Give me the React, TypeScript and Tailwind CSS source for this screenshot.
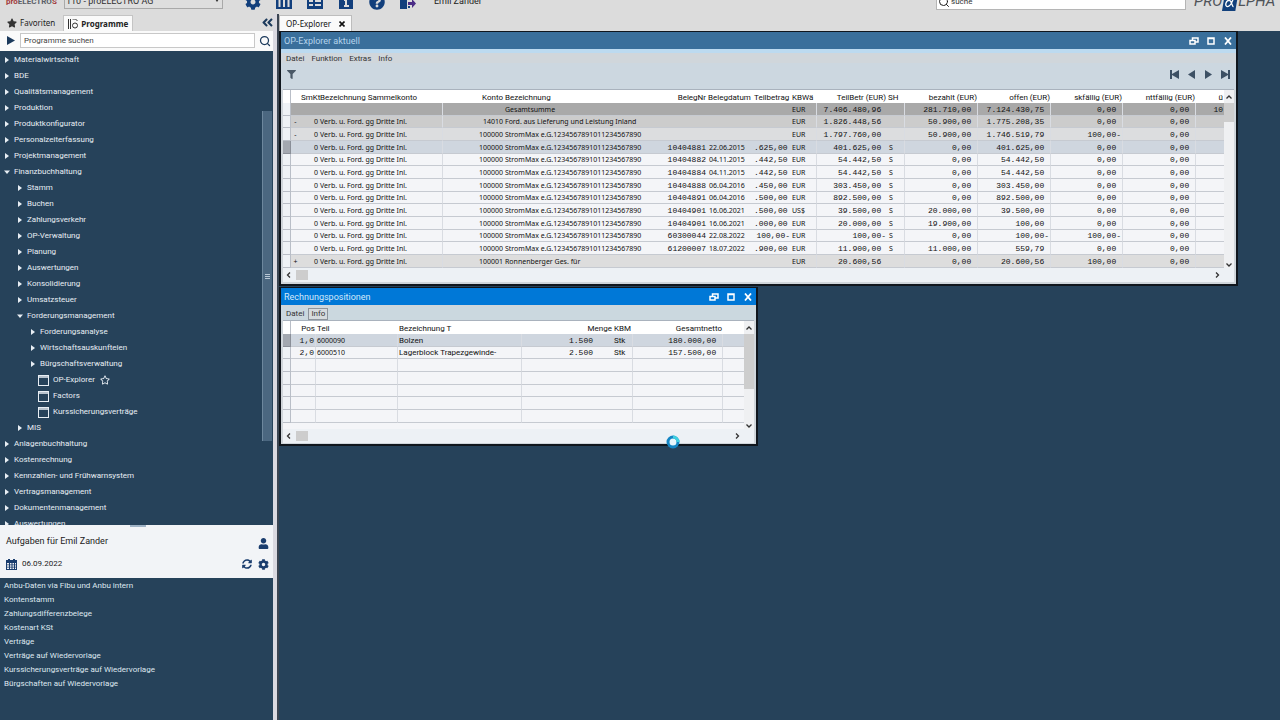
import React from "react";
import { FaAngleDoubleLeft, FaCog, FaFilter, FaQuestionCircle, FaRegStar, FaStar, FaSyncAlt, FaUser } from "react-icons/fa";
import { FiSearch } from "react-icons/fi";

type Kind = "closed" | "open" | "leaf";
type TreeRow = { level: number; label: string; kind: Kind; star?: boolean };

const tree: TreeRow[] = [
  { level: 0, label: "Materialwirtschaft", kind: "closed" },
  { level: 0, label: "BDE", kind: "closed" },
  { level: 0, label: "Qualitätsmanagement", kind: "closed" },
  { level: 0, label: "Produktion", kind: "closed" },
  { level: 0, label: "Produktkonfigurator", kind: "closed" },
  { level: 0, label: "Personalzeiterfassung", kind: "closed" },
  { level: 0, label: "Projektmanagement", kind: "closed" },
  { level: 0, label: "Finanzbuchhaltung", kind: "open" },
  { level: 1, label: "Stamm", kind: "closed" },
  { level: 1, label: "Buchen", kind: "closed" },
  { level: 1, label: "Zahlungsverkehr", kind: "closed" },
  { level: 1, label: "OP-Verwaltung", kind: "closed" },
  { level: 1, label: "Planung", kind: "closed" },
  { level: 1, label: "Auswertungen", kind: "closed" },
  { level: 1, label: "Konsolidierung", kind: "closed" },
  { level: 1, label: "Umsatzsteuer", kind: "closed" },
  { level: 1, label: "Forderungsmanagement", kind: "open" },
  { level: 2, label: "Forderungsanalyse", kind: "closed" },
  { level: 2, label: "Wirtschaftsauskunfteien", kind: "closed" },
  { level: 2, label: "Bürgschaftsverwaltung", kind: "closed" },
  { level: 3, label: "OP-Explorer", kind: "leaf", star: true },
  { level: 3, label: "Factors", kind: "leaf" },
  { level: 3, label: "Kurssicherungsverträge", kind: "leaf" },
  { level: 1, label: "MIS", kind: "closed" },
  { level: 0, label: "Anlagenbuchhaltung", kind: "closed" },
  { level: 0, label: "Kostenrechnung", kind: "closed" },
  { level: 0, label: "Kennzahlen- und Frühwarnsystem", kind: "closed" },
  { level: 0, label: "Vertragsmanagement", kind: "closed" },
  { level: 0, label: "Dokumentenmanagement", kind: "closed" },
  { level: 0, label: "Auswertungen", kind: "closed" },
];

const indent = ["pl-1", "pl-[17px]", "pl-[30px]", "pl-[38px]"];

const tasks = [
  "Anbu-Daten via Fibu und Anbu intern",
  "Kontenstamm",
  "Zahlungsdifferenzbelege",
  "Kostenart KSt",
  "Verträge",
  "Verträge auf Wiedervorlage",
  "Kurssicherungsverträge auf Wiedervorlage",
  "Bürgschaften auf Wiedervorlage",
];

function Arrow({ open }: { open?: boolean }) {
  return (
    <svg viewBox="0 0 6 6" className="size-[6px] shrink-0 fill-current">
      {open ? <path d="M0 1.5h6L3 5z" /> : <path d="M1 0v6l4-3z" />}
    </svg>
  );
}

function WindowIcon() {
  return (
    <svg viewBox="0 0 11 11" className="size-[11px] shrink-0" fill="none" stroke="currentColor">
      <rect x="0.5" y="0.5" width="10" height="10" />
      <path d="M0 2h11" strokeWidth="1.5" />
    </svg>
  );
}

function CalendarIcon() {
  return (
    <svg viewBox="0 0 11 11" className="size-[11px] shrink-0" fill="currentColor">
      <path
        fillRule="evenodd"
        d="M2 0h2v1h3V0h2v1h2v10H0V1h2zM1 4v1.500h2V4zM4 4v1.500h1.500V4zM6.500 4v1.500H8V4zM9 4v1.500h1V4zM1 6.200v1.500h2V6.200zM4 6.200v1.500h1.500V6.200zM6.500 6.200v1.500H8V6.200zM9 6.200v1.500h1V6.200zM1 8.500V10h2V8.500zM4 8.500V10h1.500V8.500zM6.500 8.500V10H8V8.500zM9 8.500V10h1V8.500z"
      />
    </svg>
  );
}

function TreeItem({ row }: { row: TreeRow }) {
  return (
    <li>
      <button type="button" className={`flex h-4 w-full items-center gap-1 whitespace-nowrap text-left ${indent[row.level]}`}>
        {row.kind === "leaf" ? <WindowIcon /> : <Arrow open={row.kind === "open"} />}
        <span>{row.label}</span>
        {row.star && <FaRegStar className="ml-px size-[10px]" />}
      </button>
    </li>
  );
}

function Header() {
  const icon = "size-4 text-[#123f7c]";
  return (
    <header className="h-[14px] shrink-0 overflow-hidden bg-[#dcdcdc]">
      <div className="-mt-[10px] flex h-6 items-center">
        <div className="w-16 shrink-0 pl-[6px] text-[8px] leading-3 font-bold text-[#5b5f68]">
          <span className="text-[#a33a3a]">pro</span>ELECTRO<span className="text-[#a33a3a]">S</span>
        </div>
        <div className="flex h-4 w-[159px] shrink-0 -translate-y-px items-center border border-[#a9a9a9] bg-[#dedede] pr-[2px] text-[#333]">
          <select aria-label="Firma" className="h-3 flex-1 appearance-none bg-transparent pl-px text-[9px] leading-3">
            <option>110 - proELECTRO AG</option>
          </select>
          <svg viewBox="0 0 6 4" className="h-1 w-[6px] fill-current"><path d="M1 0h4L3 3z" /></svg>
        </div>
        <div className="flex shrink-0 items-center gap-[15px] pl-[22px]">
          <button type="button" aria-label="Einstellungen"><FaCog className={icon} /></button>
          <button type="button" aria-label="Module">
            <svg viewBox="0 0 16 16" className={icon} fill="currentColor">
              <path d="M0 0h16v15H0zM2.500 5v8h2V5zM7 5v8h2V5zM11.500 5v8h2V5z" fillRule="evenodd" />
            </svg>
          </button>
          <button type="button" aria-label="Liste">
            <svg viewBox="0 0 16 16" className={icon} fill="currentColor">
              <path d="M0 0h16v15H0zM2 6v2h4V6zM8 6v2h6V6zM2 10v2h4v-2zM8 10v2h6v-2z" fillRule="evenodd" />
            </svg>
          </button>
          <button type="button" aria-label="Info">
            <svg viewBox="0 0 16 16" className={icon} fill="currentColor">
              <path d="M1 0h14v15H1zM6 5v2h1v4H6v2h5v-2H9V5z" fillRule="evenodd" />
            </svg>
          </button>
          <button type="button" aria-label="Hilfe"><FaQuestionCircle className={icon} /></button>
          <button type="button" aria-label="Abmelden">
            <svg viewBox="0 0 16 16" className={icon} fill="currentColor">
              <path d="M0 0h7v15H0zM8 12h2v2H8z" />
              <path d="M8 8h4V5l4 4.500-4 4.500v-3H8z" fill="#4b2c86" />
            </svg>
          </button>
        </div>
        <span className="pl-[18px] text-[9px] text-[#222]">Emil Zander</span>
        <label className="ml-auto flex h-4 w-[250px] items-center gap-px border border-[#b5b5b5] bg-white pl-px">
          <FiSearch className="size-3 shrink-0 text-[#222]" />
          <input aria-label="Suche" placeholder="suche" className="w-full bg-transparent pb-px text-[8px] outline-none placeholder:text-[#333]" />
        </label>
        <div className="flex w-[94px] shrink-0 items-center pb-[2px] pl-2 text-[15px] leading-4 text-[#4f5358] italic">
          PRO
          <svg viewBox="0 0 18 18" className="mt-1 h-[18px] w-4 shrink-0">
            <path d="M3 0h15l-3 18H0z" fill="#12407c" />
            <path d="M13 3c-2 7-4 10-7 10-3 0-2-7 2-7 3 0 3 7 5 7" fill="none" stroke="#fff" strokeWidth="1.500" />
          </svg>
          LPHA
        </div>
      </div>
    </header>
  );
}

function Sidebar() {
  return (
    <aside className="flex w-[273px] shrink-0 flex-col bg-[#26425a] text-[8px] leading-none">
      <div className="flex h-[17px] shrink-0 items-end bg-[#dcdcdc] font-['Noto_Sans',sans-serif] text-[#222]">
        <button type="button" className="flex h-4 items-center gap-[3px] pl-[7px]">
          <FaStar className="size-[10px] text-[#333]" />
          Favoriten
        </button>
        <button type="button" className="ml-2 flex h-4 items-center gap-[3px] border border-b-0 border-[#c4c4c4] bg-[#fafafa] px-1 font-bold">
          <svg viewBox="0 0 10 10" className="size-[10px]" fill="none" stroke="#333">
            <path d="M.5 0v10M2.500 0v10" />
            <path d="M4.500 0h3l2 2" />
            <circle cx="7" cy="6.500" r="2.500" />
          </svg>
          Programme
        </button>
        <button type="button" aria-label="Einklappen" className="-mr-px mb-[2px] ml-auto"><FaAngleDoubleLeft className="size-[13px] text-[#1c3a5c]" /></button>
      </div>
      <div className="flex h-5 shrink-0 items-center bg-[#fafafa] pb-px pl-[7px] text-[#1c3a5c]">
        <svg viewBox="0 0 8 9" className="h-[9px] w-2 shrink-0 fill-current"><path d="M0 0l8 4.500L0 9z" /></svg>
        <input aria-label="Programme suchen" placeholder="Programme suchen" className="mr-1 ml-[5px] h-[15px] w-[235px] border border-[#c8c8c8] bg-white px-[3px] outline-none placeholder:text-[#444]" />
        <FiSearch className="size-3" strokeWidth={2.500} />
      </div>
      <nav className="flex min-h-0 flex-1 overflow-hidden text-[#e8eef4]">
        <ul className="flex-1 pt-px">
          {tree.map((row, i) => <TreeItem key={i} row={row} />)}
        </ul>
        <div className="mr-px flex w-[10px] flex-col pt-[60px]">
          <div className="flex h-[330px] flex-col items-center justify-center gap-px border-l border-[#6d879d] bg-[#4b6780]">
            <i className="h-px w-[5px] bg-[#b9c8d6]" />
            <i className="h-px w-[5px] bg-[#b9c8d6]" />
            <i className="h-px w-[5px] bg-[#b9c8d6]" />
          </div>
        </div>
      </nav>
      <section className="shrink-0">
        <div className="flex h-[53px] flex-col bg-[#f2f4f7] pr-1 pl-[6px] text-[#222]">
          <div className="mx-auto h-[2px] w-4 bg-[#9fb3c6]" />
          <div className="flex h-7 items-center justify-between text-[9px]">
            <h2>Aufgaben für Emil Zander</h2>
            <FaUser className="mt-1 size-[11px] text-[#1a3d6e]" />
          </div>
          <div className="flex h-[18px] items-center text-[#1a3d6e]">
            <CalendarIcon />
            <time className="flex-1 pl-[5px] text-[#222]">06.09.2022</time>
            <FaSyncAlt className="mr-[6px] size-[10px]" />
            <FaCog className="size-[11px]" />
          </div>
        </div>
        <ul className="h-[142px] pt-px pl-1 text-[#dfe8f0]">
          {tasks.map((t) => <li key={t}><a href="#" className="flex h-[14px] items-center">{t}</a></li>)}
        </ul>
      </section>
    </aside>
  );
}

function WindowTitle({ title, active }: { title: string; active?: boolean }) {
  return (
    <div className={`flex h-[17px] shrink-0 items-center gap-2 pt-px pr-1 pl-[3px] text-white ${active ? "bg-[#0078d7]" : "bg-[#3a6f9b]"}`}>
      <h2 className={`flex-1 text-[9px] ${active ? "text-[#d4e9fb]" : "text-[#b5d4ec]"}`}>{title}</h2>
      <button type="button" aria-label="Wiederherstellen">
        <svg viewBox="0 0 10 8" className="h-2 w-[10px]" fill="none" stroke="currentColor" strokeWidth="1.500">
          <path d="M3.500 3V1H9v4H6.500M1 3.500h5v3.500H1z" />
        </svg>
      </button>
      <button type="button" aria-label="Maximieren">
        <svg viewBox="0 0 8 8" className="size-2" fill="none" stroke="currentColor" strokeWidth="1.500">
          <path d="M1 1h6v6H1zM1 1.500h6" />
        </svg>
      </button>
      <button type="button" aria-label="Schließen" className="ml-px">
        <svg viewBox="0 0 8 8" className="size-2" fill="none" stroke="currentColor" strokeWidth="1.800">
          <path d="M1 0.500l6 7M7 0.500l-6 7" />
        </svg>
      </button>
    </div>
  );
}

function Chevron({ d }: { d: string }) {
  return (
    <svg viewBox="0 0 6 6" className="size-[6px] shrink-0" fill="none" stroke="#333" strokeWidth="1.300"><path d={d} /></svg>
  );
}

function VScroll({ thumb }: { thumb: string }) {
  return (
    <div className="flex w-[10px] shrink-0 flex-col items-center bg-[#eff0f2] pt-1">
      <Chevron d="M.5 4.500L3 2l2.500 2.500" />
      <div className={`mt-[3px] w-full bg-[#cdcdcd] ${thumb}`} />
      <div className="flex-1" />
      <Chevron d="M.5 1.500L3 4l2.500-2.500" />
    </div>
  );
}

function HScroll() {
  return (
    <div className="flex h-[14px] items-center gap-1 bg-[#edf1f5] pr-[14px] pl-[3px]">
      <Chevron d="M4 .5L1.500 3 4 5.500" />
      <div className="h-[10px] w-3 bg-[#cdcdcd]" />
      <div className="flex-1" />
      <Chevron d="M2 .5L4.500 3 2 5.500" />
    </div>
  );
}

type OpRow = {
  mark?: string; smkt: string; bez: string; konto: string; name: string; beleg: string; datum: string; teil: string;
  kbw: string; betr: string; sh: string; bezahlt: string; offen: string; sk: string; nt: string; last?: string; tone: string;
};

const V = "Verb. u. Ford. gg Dritte Inl.";
const S = "StromMax e.G.1234567891011234567890";
const plain = "bg-[#f4f5f8]";
const op = (beleg: string, datum: string, teil: string, kbw: string, betr: string, bezahlt: string, offen: string, sk = "0,00", tone = plain): OpRow => ({
  smkt: "0", bez: V, konto: "100000", name: S, beleg, datum, teil, kbw, betr, sh: "S", bezahlt, offen, sk, nt: "0,00", tone,
});

const opRows: OpRow[] = [
  { smkt: "", bez: "", konto: "", name: "Gesamtsumme", beleg: "", datum: "", teil: "", kbw: "EUR", betr: "7.406.480,96", sh: "", bezahlt: "281.710,00", offen: "7.124.430,75", sk: "0,00", nt: "0,00", last: "10", tone: "bg-[#a9a9a9]" },
  { mark: "-", smkt: "0", bez: V, konto: "14010", name: "Ford. aus Lieferung und Leistung Inland", beleg: "", datum: "", teil: "", kbw: "EUR", betr: "1.826.448,56", sh: "", bezahlt: "50.900,00", offen: "1.775.208,35", sk: "0,00", nt: "0,00", tone: "bg-[#cccccc]" },
  { mark: "-", smkt: "0", bez: V, konto: "100000", name: S, beleg: "", datum: "", teil: "", kbw: "EUR", betr: "1.797.760,00", sh: "", bezahlt: "50.900,00", offen: "1.746.519,79", sk: "100,00-", nt: "0,00", tone: "bg-[#dcdddf]" },
  op("10404881", "22.06.2015", ".625,00", "EUR", "401.625,00", "0,00", "401.625,00", "0,00", "bg-[#cfd6df]"),
  op("10404882", "04.11.2015", ".442,50", "EUR", "54.442,50", "0,00", "54.442,50"),
  op("10404884", "04.11.2015", ".442,50", "EUR", "54.442,50", "0,00", "54.442,50"),
  op("10404888", "06.04.2016", ".450,00", "EUR", "303.450,00", "0,00", "303.450,00"),
  op("10404891", "06.04.2016", ".500,00", "EUR", "892.500,00", "0,00", "892.500,00"),
  op("10404901", "16.06.2021", ".500,00", "US$", "39.500,00", "20.000,00", "39.500,00"),
  op("10404901", "16.06.2021", ".000,00", "EUR", "20.000,00", "19.900,00", "100,00"),
  op("60300044", "22.08.2022", "100,00-", "EUR", "100,00-", "0,00", "100,00-", "100,00-"),
  op("61200007", "18.07.2022", ".900,00", "EUR", "11.900,00", "11.000,00", "559,79"),
  { mark: "+", smkt: "0", bez: V, konto: "100001", name: "Ronnenberger Ges. für", beleg: "", datum: "", teil: "", kbw: "EUR", betr: "20.600,56", sh: "", bezahlt: "0,00", offen: "20.600,56", sk: "100,00", nt: "0,00", tone: "bg-[#dddddd]" },
];

const cell = "overflow-hidden border-b border-[#c6cad1] px-px";
const num = `${cell} whitespace-pre text-right font-['Liberation_Mono',monospace] text-[8px]`;
const head = "px-px pt-px text-left font-['Roboto',sans-serif] text-[8px] font-normal";
const headR = "px-px pt-px text-right font-['Roboto',sans-serif] text-[8px] font-normal";
const line = "border-r border-r-[#d9dce2]";
const rowMark = "border-r border-b border-[#b9bec7] bg-[#eef2f6]";
const rowMarkActive = "border-r border-b border-[#8a8f98] bg-[#a3a8b0]";

/* Amounts keep a trailing slot for the minus sign. */
const amt = (v: string) => (v.endsWith("-") || !v ? v : `${v} `);

function OpTable() {
  return (
    <table className="w-full table-fixed border-separate border-spacing-0 bg-white font-['Noto_Sans',sans-serif] text-[7px] leading-[11px] whitespace-nowrap text-[#111]">
      <colgroup>
        <col className="w-2" /><col className="w-[9px]" /><col className="w-[19px]" /><col className="w-[124px]" />
        <col className="w-[61px]" /><col className="w-[143px]" /><col className="w-[60px]" /><col className="w-[46px]" />
        <col className="w-[38px]" /><col className="w-[26px]" /><col className="w-[70px]" /><col className="w-[18px]" />
        <col className="w-[73px]" /><col className="w-[73px]" /><col className="w-[72px]" /><col className="w-[73px]" /><col />
      </colgroup>
      <thead>
        <tr className="h-[13px]">
          <th className="border-r border-[#b9bec7]" /><th />
          <th className={headR}>SmKt</th><th className={head}>Bezeichnung Sammelkonto</th><th className={headR}>Konto</th>
          <th className={head}>Bezeichnung</th><th className={headR}>BelegNr</th><th className={head}>Belegdatum</th>
          <th className={head}>Teilbetrag</th><th className={head}>KBWä</th><th className={headR}>TeilBetr (EUR)</th>
          <th className={head}>SH</th><th className={headR}>bezahlt (EUR)</th><th className={headR}>offen (EUR)</th>
          <th className={headR}>skfällig (EUR)</th><th className={headR}>nttfällig (EUR)</th><th className={headR}>ü</th>
        </tr>
      </thead>
      <tbody>
        {opRows.map((r, i) => (
          <tr key={i} className={`h-[13px] nth-[3n+2]:h-3 ${r.tone}`}>
            <td className={i === 3 ? rowMarkActive : rowMark} />
            <td className={`${cell} text-center`}>{r.mark}</td>
            <td className={`${cell} text-right`}>{r.smkt}</td>
            <td className={`${cell} ${line}`}>{r.bez}</td>
            <td className={`${cell} text-right`}>{r.konto}</td>
            <td className={cell}>{r.name}</td>
            <td className={num}>{r.beleg}</td>
            <td className={`${cell} pl-[2px]`}>{r.datum}</td>
            <td className={num}>{amt(r.teil)}</td>
            <td className={`${cell} ${line}`}>{r.kbw}</td>
            <td className={num}>{amt(r.betr)}</td>
            <td className={`${cell} ${line} pl-[2px]`}>{r.sh}</td>
            <td className={`${num} ${line}`}>{amt(r.bezahlt)}</td>
            <td className={`${num} ${line}`}>{amt(r.offen)}</td>
            <td className={`${num} ${line}`}>{amt(r.sk)}</td>
            <td className={`${num} ${line}`}>{amt(r.nt)}</td>
            <td className={num}>{r.last}</td>
          </tr>
        ))}
      </tbody>
    </table>
  );
}

function PositionsTable() {
  const rows = [
    ["1,0", "6000090", "Bolzen", "1.500", "Stk", "180.000,00"],
    ["2,0", "6000510", "Lagerblock Trapezgewinde-", "2.500", "Stk", "157.500,00"],
    ...Array.from({ length: 5 }, () => ["", "", "", "", "", ""]),
  ];
  return (
    <table className="w-full table-fixed border-separate border-spacing-0 bg-white text-[8px] leading-[11px] whitespace-nowrap text-[#111]">
      <colgroup>
        <col className="w-2" /><col className="w-[25px]" /><col className="w-[82px]" /><col className="w-[124px]" />
        <col className="w-[91px]" /><col className="w-5" /><col className="w-[90px]" /><col />
      </colgroup>
      <thead>
        <tr className="h-[13px]">
          <th className="border-r border-[#b9bec7]" />
          <th className={headR}>Pos</th><th className={head}>Teil</th><th className={head}>Bezeichnung T</th>
          <th className={headR}>Menge</th><th className={head}>KBM</th><th className={headR}>Gesamtnetto</th><th />
        </tr>
      </thead>
      <tbody>
        {rows.map((r, i) => (
          <tr key={i} className={`h-[13px] nth-[3n+2]:h-3 ${i === 0 ? "bg-[#cfd6df]" : plain}`}>
            <td className={i === 0 ? rowMarkActive : rowMark} />
            <td className={`${num} ${line}`}>{r[0]}</td>
            <td className={`${cell} ${line} font-['Noto_Sans',sans-serif] text-[7px]`}>{r[1]}</td>
            <td className={`${cell} ${line}`}>{r[2]}</td>
            <td className={`${num} pr-5`}>{r[3]}</td>
            <td className={`${cell} ${line}`}>{r[4]}</td>
            <td className={`${num} ${line}`}>{amt(r[5])}</td>
            <td className={cell} />
          </tr>
        ))}
      </tbody>
    </table>
  );
}

function Workspace() {
  const nav = "size-[9px] text-[#3d5064]";
  return (
    <main className="flex min-w-0 flex-1 flex-col text-[8px] leading-none">
      <div className="flex h-[17px] shrink-0 items-end bg-[#dcdcdc]">
        <button type="button" className="flex h-4 items-center gap-2 border border-b-0 border-[#bdbdbd] bg-[#fafafa] px-[6px] font-['Noto_Sans',sans-serif] text-[#111]">
          OP-Explorer
          <svg viewBox="0 0 6 6" className="size-[6px]" stroke="#111" strokeWidth="1.600"><path d="M.5 .5l5 5M5.500 .5l-5 5" /></svg>
        </button>
      </div>
      <div className="relative flex flex-1 flex-col items-start gap-px bg-[#26425a] pr-[42px]">
        <section className="flex w-full flex-col border-2 border-t border-[#10161d] bg-[#d0d6db]">
          <WindowTitle title="OP-Explorer aktuell" />
          <div className="h-1 bg-[#bcdaf0]" />
          <div className="flex h-[10px] items-center gap-[7px] pt-px pl-[5px] text-[#333]">
            <button type="button">Datei</button><button type="button">Funktion</button>
            <button type="button">Extras</button><button type="button">Info</button>
          </div>
          <div className="flex h-[26px] items-center bg-[#ccd7e0] pr-[6px] pb-1 pl-[6px]">
            <button type="button" aria-label="Filter"><FaFilter className="size-[9px] text-[#4a5866]" /></button>
            <div className="ml-auto flex gap-2">
              <button type="button" aria-label="Erster"><svg viewBox="0 0 9 9" className={nav}><path d="M0 0h2v4l7-4v9L2 5v4H0z" fill="currentColor" /></svg></button>
              <button type="button" aria-label="Zurück"><svg viewBox="0 0 9 9" className={nav}><path d="M8 0v9L1 4.500z" fill="currentColor" /></svg></button>
              <button type="button" aria-label="Weiter"><svg viewBox="0 0 9 9" className={nav}><path d="M1 0v9l7-4.500z" fill="currentColor" /></svg></button>
              <button type="button" aria-label="Letzter"><svg viewBox="0 0 9 9" className={nav}><path d="M9 0H7v4L0 0v9l7-4v4h2z" fill="currentColor" /></svg></button>
            </div>
          </div>
          <div className="mx-[2px] flex border-t border-[#a9b2bd]">
            <div className="min-w-0 flex-1"><OpTable /></div>
            <VScroll thumb="h-[19px]" />
          </div>
          <div className="mx-[2px] mb-[2px]"><HScroll /></div>
        </section>
        <section className="flex w-[479px] flex-col border-2 border-t border-[#10161d] bg-[#d0d6db]">
          <WindowTitle title="Rechnungspositionen" active />
          <div className="mt-[2px] flex h-[13px] items-center gap-1 bg-[#cbd8df] pt-px pl-[5px] text-[#333]">
            <button type="button">Datei</button>
            <button type="button" className="h-3 border border-[#8d949c] bg-[#d6dadd] px-[2px]">Info</button>
          </div>
          <div className="mx-[2px] flex border-t border-[#a9b2bd] bg-[#f4f5f8]">
            <div className="min-w-0 flex-1 pb-[6px]"><PositionsTable /></div>
            <VScroll thumb="h-[55px]" />
          </div>
          <div className="mx-[2px] mb-px"><HScroll /></div>
        </section>
        <svg viewBox="0 0 14 14" className="absolute top-[404px] left-[387px] size-[14px]" fill="none" strokeWidth="3">
          <circle cx="7" cy="7" r="5" fill="#e8f6fc" stroke="#1486c4" />
          <path d="M7 2a5 5 0 0 1 5 5" stroke="#3fd0e0" />
        </svg>
      </div>
    </main>
  );
}

export default function App() {
  return (
    <div className="flex h-screen flex-col overflow-hidden bg-[#26425a] font-['Roboto',sans-serif]">
      <Header />
      <div className="flex min-h-0 flex-1">
        <Sidebar />
        <div className="w-[6px] shrink-0 border-r-2 border-[#3b4552] bg-[#dad9e0]" />
        <Workspace />
      </div>
    </div>
  );
}
